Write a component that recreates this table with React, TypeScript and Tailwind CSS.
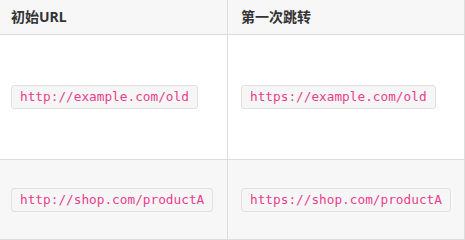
import * as React from "react";

const rows = [
  { from: "http://example.com/old", to: "https://example.com/old", height: "h-[125px]", bg: "bg-white" },
  { from: "http://shop.com/productA", to: "https://shop.com/productA", height: "h-[80px]", bg: "bg-[#f7f7f7]" },
];

function Code({ children }: { children: React.ReactNode }) {
  return (
    <code className="inline-block rounded-[3px] border border-[#e1e1e4] bg-[#f6f6f6] px-[8px] py-[3px] font-['DejaVu_Sans_Mono',monospace] text-[12.75px] leading-[16px] text-[#e83e8c]">
      {children}
    </code>
  );
}

export default function App() {
  return (
    <div className="w-[465px] h-[240px] bg-white font-['Noto_Sans','Noto_Sans_CJK_SC',sans-serif] text-[#333]">
      <div className="flex h-[35px] border-b border-r border-[#ddd] bg-[#f7f7f7]">
        <div className="flex w-[228px] items-center border-r border-[#ddd] pl-[11px] pb-[1px] text-[14px] font-bold">
          初始URL
        </div>
        <div className="flex flex-1 items-center pl-[13px] pb-[1px] text-[14px] font-bold">
          第一次跳转
        </div>
      </div>
      {rows.map((r) => (
        <div key={r.from} className={`flex border-b border-r border-[#ddd] ${r.height} ${r.bg}`}>
          <div className="flex w-[228px] items-center border-r border-[#ddd] pl-[11px]">
            <Code>{r.from}</Code>
          </div>
          <div className="flex flex-1 items-center pl-[13px]">
            <Code>{r.to}</Code>
          </div>
        </div>
      ))}
    </div>
  );
}
